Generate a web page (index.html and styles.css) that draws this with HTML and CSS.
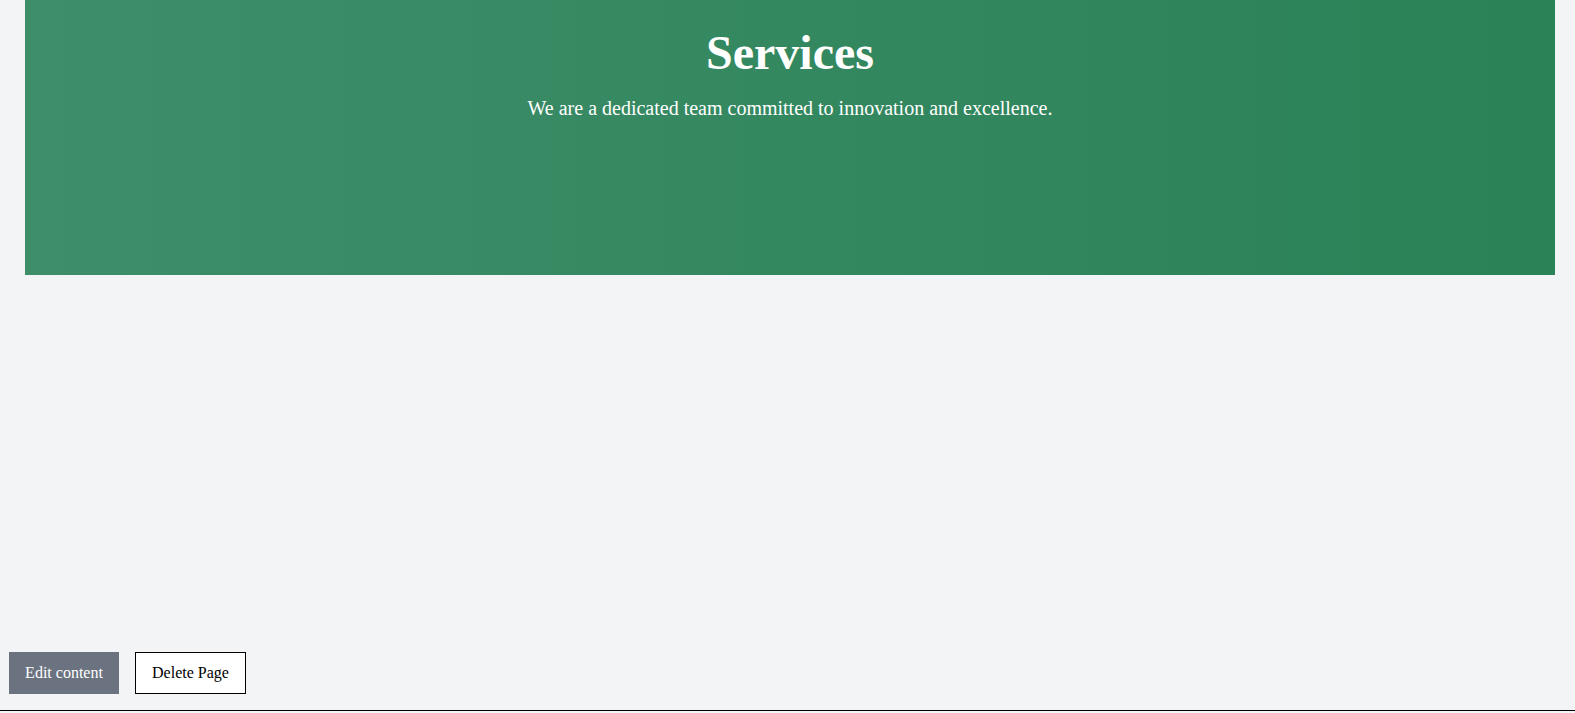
FILE: index.html
```html
<!DOCTYPE html>
<html lang="en">
<head>
<meta charset="utf-8">
<title>Services</title>
<link rel="stylesheet" href="styles.css">
</head>
<body>
<div class="page">
  <main class="main">
    <section class="hero">
      <h1 class="hero-title">Services</h1>
      <p class="hero-text">We are a dedicated team committed to innovation and excellence.</p>
    </section>
  </main>
  <div class="actions">
    <button class="btn btn-edit" type="button">Edit content</button>
    <button class="btn btn-delete" type="button">Delete Page</button>
  </div>
  <div class="bottom-rule"></div>
</div>
</body>
</html>
```
FILE: styles.css
```css
html, body {
  margin: 0;
  padding: 0;
}
body {
  background: #f3f4f6;
  font-family: "Liberation Serif", "Times New Roman", serif;
  color: #000;
}
.page {
  height: 713px;
  display: flex;
  flex-direction: column;
}
.main {
  flex: 1;
  padding: 0 20px 0 25px;
}
.hero {
  height: 275px;
  box-sizing: border-box;
  background: linear-gradient(to right, #3d8e69, #2b8257);
  color: #fff;
  text-align: center;
  padding-top: 25px;
}
.hero-title {
  margin: 0;
  font-size: 48px;
  font-weight: bold;
  line-height: 56px;
}
.hero-text {
  margin: 15px 0 0;
  font-size: 20px;
  line-height: 24px;
}
.actions {
  display: flex;
  gap: 16px;
  padding: 0 9px 16px;
}
.btn {
  font-family: "Liberation Serif", "Times New Roman", serif;
  font-size: 16px;
  height: 42px;
  padding: 0 16px;
  border-radius: 0;
  cursor: pointer;
}
.btn-edit {
  width: 110px;
  background: #6b7280;
  color: #fff;
  border: none;
}
.btn-delete {
  width: 111px;
  background: #fff;
  color: #000;
  border: 1px solid #000;
}
.bottom-rule {
  height: 1px;
  background: #000;
  margin-bottom: 2px;
}
```
